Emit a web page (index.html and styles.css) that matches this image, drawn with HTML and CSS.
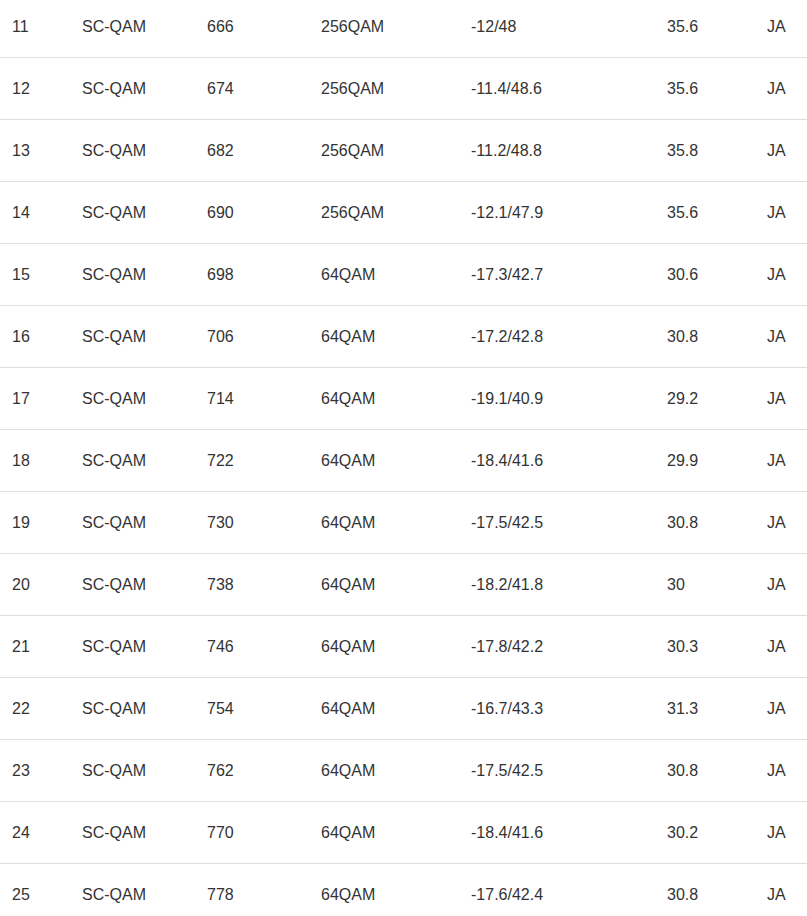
FILE: index.html
```html
<!DOCTYPE html>
<html>
<head>
<meta charset="utf-8">
<link rel="stylesheet" href="styles.css">
</head>
<body>
<table class="ch-table">
<colgroup>
<col class="c1"><col class="c2"><col class="c3"><col class="c4"><col class="c5"><col class="c6"><col class="c7">
</colgroup>
<tbody>
<tr><td>11</td><td>SC-QAM</td><td>666</td><td>256QAM</td><td>-12/48</td><td>35.6</td><td>JA</td></tr>
<tr><td>12</td><td>SC-QAM</td><td>674</td><td>256QAM</td><td>-11.4/48.6</td><td>35.6</td><td>JA</td></tr>
<tr><td>13</td><td>SC-QAM</td><td>682</td><td>256QAM</td><td>-11.2/48.8</td><td>35.8</td><td>JA</td></tr>
<tr><td>14</td><td>SC-QAM</td><td>690</td><td>256QAM</td><td>-12.1/47.9</td><td>35.6</td><td>JA</td></tr>
<tr><td>15</td><td>SC-QAM</td><td>698</td><td>64QAM</td><td>-17.3/42.7</td><td>30.6</td><td>JA</td></tr>
<tr><td>16</td><td>SC-QAM</td><td>706</td><td>64QAM</td><td>-17.2/42.8</td><td>30.8</td><td>JA</td></tr>
<tr><td>17</td><td>SC-QAM</td><td>714</td><td>64QAM</td><td>-19.1/40.9</td><td>29.2</td><td>JA</td></tr>
<tr><td>18</td><td>SC-QAM</td><td>722</td><td>64QAM</td><td>-18.4/41.6</td><td>29.9</td><td>JA</td></tr>
<tr><td>19</td><td>SC-QAM</td><td>730</td><td>64QAM</td><td>-17.5/42.5</td><td>30.8</td><td>JA</td></tr>
<tr><td>20</td><td>SC-QAM</td><td>738</td><td>64QAM</td><td>-18.2/41.8</td><td>30</td><td>JA</td></tr>
<tr><td>21</td><td>SC-QAM</td><td>746</td><td>64QAM</td><td>-17.8/42.2</td><td>30.3</td><td>JA</td></tr>
<tr><td>22</td><td>SC-QAM</td><td>754</td><td>64QAM</td><td>-16.7/43.3</td><td>31.3</td><td>JA</td></tr>
<tr><td>23</td><td>SC-QAM</td><td>762</td><td>64QAM</td><td>-17.5/42.5</td><td>30.8</td><td>JA</td></tr>
<tr><td>24</td><td>SC-QAM</td><td>770</td><td>64QAM</td><td>-18.4/41.6</td><td>30.2</td><td>JA</td></tr>
<tr><td>25</td><td>SC-QAM</td><td>778</td><td>64QAM</td><td>-17.6/42.4</td><td>30.8</td><td>JA</td></tr>
</tbody>
</table>
</body>
</html>
```
FILE: styles.css
```css
html, body {
  margin: 0;
  padding: 0;
  background: #fff;
}
body {
  font-family: "Liberation Sans", Arial, sans-serif;
  font-size: 16px;
  color: #333;
  overflow: hidden;
}
.ch-table {
  width: 807px;
  border-collapse: collapse;
  table-layout: fixed;
  margin-top: -4px;
}
.c1 { width: 70px; }
.c2 { width: 125px; }
.c3 { width: 114px; }
.c4 { width: 150px; }
.c5 { width: 196px; }
.c6 { width: 100px; }
.c7 { width: 52px; }
.ch-table tr {
  border-bottom: 1px solid #ddd;
}
.ch-table td {
  height: 61px;
  padding: 0 0 0 12px;
  line-height: 22px;
  vertical-align: middle;
  white-space: nowrap;
}
```
